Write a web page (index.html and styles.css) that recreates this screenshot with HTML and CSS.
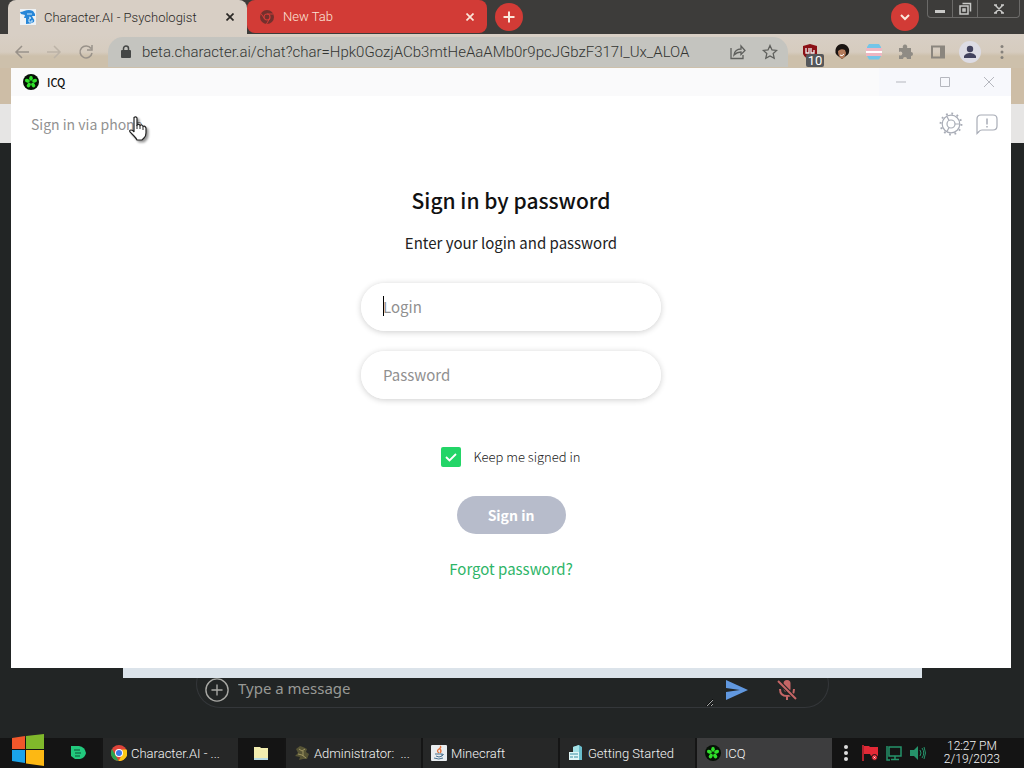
FILE: index.html
```html
<!DOCTYPE html>
<html lang="en">
<head>
<meta charset="utf-8">
<title>ICQ</title>
<link rel="stylesheet" href="styles.css">
</head>
<body>
<svg class="defs" aria-hidden="true">
  <symbol id="icq" viewBox="0 0 16 16">
    <circle cx="8" cy="8" r="8" fill="#061006"/>
    <g fill="#2fe02a"><ellipse cx="8" cy="4.2" rx="1.8" ry="2.5"/><ellipse cx="8" cy="4.2" rx="1.8" ry="2.5" transform="rotate(72 8 8)"/><ellipse cx="8" cy="4.2" rx="1.8" ry="2.5" transform="rotate(144 8 8)"/><ellipse cx="8" cy="4.2" rx="1.8" ry="2.5" transform="rotate(216 8 8)"/><ellipse cx="8" cy="4.2" rx="1.8" ry="2.5" transform="rotate(288 8 8)"/></g>
    <circle cx="8" cy="8" r="1" fill="#0c300c"/>
  </symbol>
</svg>
<div class="desktop">
  <div class="browser">
    <header class="tabstrip">
      <div class="tab tab-active">
        <svg class="icon16" viewBox="0 0 16 16"><rect width="16" height="16" fill="#eef2f5"/><path d="M0 3q2 0 4-1 5-2 9 0l2 3v2h-3l1 2q2 2 1 4-3 2-8 2V9H4L5 6 1 5z" fill="#2686d8"/><path d="M7 5h5M9 8l2 1-2 1v3h3v-2" stroke="#cfe9fb" fill="none"/></svg>
        <span class="tab-title">Character.AI - Psychologist</span>
        <button class="tab-close" aria-label="Close tab"><svg viewBox="0 0 8 8"><path d="M.5.5l7 7m0-7l-7 7"/></svg></button>
      </div>
      <div class="tab tab-red">
        <svg class="icon16" viewBox="0 0 16 16"><circle cx="8" cy="8" r="7" fill="#73302d"/><circle cx="8" cy="8" r="3" fill="none" stroke="#d23c38" stroke-width="1.2"/><path d="M8 5h6.500M5.400 9.500L2 4.500M10.600 9.500L7.500 15" stroke="#d23c38"/></svg>
        <span class="tab-title">New Tab</span>
        <button class="tab-close" aria-label="Close tab"><svg viewBox="0 0 8 8"><path d="M.5.5l7 7m0-7l-7 7"/></svg></button>
      </div>
      <button class="round-btn" aria-label="New tab"><svg viewBox="0 0 28 28"><path d="M14 8.500v11M8.500 14h11"/></svg></button>
      <span class="grow"></span>
      <button class="round-btn search-tabs" aria-label="Search tabs"><svg viewBox="0 0 28 28"><path d="M10 12l4 4 4-4"/></svg></button>
      <div class="caption">
        <button class="cap-small" aria-label="Minimize"><svg viewBox="0 0 14 14"><path d="M2 9.500h10" stroke-width="3"/></svg></button>
        <button class="cap-small" aria-label="Restore"><svg viewBox="0 0 14 14"><path d="M4.500 1.500h8v8M2 4h8v8H2zM5 7h2v2H5z" fill="none"/></svg></button>
        <button class="cap-close" aria-label="Close"><svg viewBox="0 0 14 14"><path d="M3 3l8 8m0-8l-8 8M2 3h3M9 3h3M2 11h3M9 11h3" fill="none"/></svg></button>
      </div>
    </header>
    <div class="toolbar">
      <button class="tool back" aria-label="Back"><svg viewBox="0 0 16 16"><path d="M15 8H2m6-6L2 8l6 6"/></svg></button>
      <button class="tool forward" aria-label="Forward"><svg viewBox="0 0 16 16"><path d="M1 8h13M8 2l6 6-6 6"/></svg></button>
      <button class="tool reload" aria-label="Reload"><svg viewBox="0 0 16 16"><path d="M13 4.500A6 6 0 1 0 14 9M14 1v5H9"/></svg></button>
      <div class="omnibox">
        <svg class="lock" viewBox="0 0 10 14"><rect y="5" width="10" height="8" rx="1" fill="#454746"/><path d="M2.500 6V3.500a2.500 2.500 0 0 1 5 0V6" fill="none" stroke="#454746" stroke-width="1.500"/></svg>
        <input class="url" type="text" aria-label="Address" value="beta.character.ai/chat?char=Hpk0GozjACb3mtHeAaAMb0r9pcJGbzF317I_Ux_ALOA">
        <button class="tool dark" aria-label="Share"><svg viewBox="0 0 16 16"><path d="M1 4v10.500h12V11M4 11q1-6 7-6V2l4 4.500-4 4V8Q7 8 4 11z"/></svg></button>
        <button class="tool dark star" aria-label="Bookmark"><svg viewBox="0 0 16 16"><path d="M8 1.500l2 4.400 4.700.5-3.500 3.200 1 4.700L8 11.900l-4.200 2.400 1-4.700L1.300 6.400 6 5.900z"/></svg></button>
      </div>
      <div class="extensions">
        <button class="tool ublock" aria-label="uBlock"><svg viewBox="0 0 16 16"><path d="M8 0l7 2v8q-2 4-7 6-5-2-7-6V2z" fill="#8b1015"/><path d="M4 4v5h3V4M9 4v5h3V6" fill="none" stroke="#eee" stroke-width="1.300"/></svg><span class="count">10</span></button>
        <button class="tool" aria-label="Profile extension"><svg viewBox="0 0 16 16"><path d="M2 4q2-4 6-4 5 0 7 5 1 5-3 7l-4 3-4-3Q0 9 2 4z" fill="#1a1411"/><path d="M4 7q3-3 7-1l1 3q-1 5-4 6-4-2-4-8z" fill="#b57c5b"/><path d="M6 11q2 2 4-1" fill="none" stroke="#fff"/></svg></button>
        <button class="tool" aria-label="Flag extension"><svg viewBox="0 0 16 16"><path d="M3 0h10l2 3v2H1V3z" fill="#73c5e8"/><path d="M0 4h16v3H0zM0 9h16v3H0z" fill="#eeb6c1"/><path d="M0 7h16v2H0z" fill="#fff"/><path d="M1 12h14l-2 3.500H3z" fill="#73c5e8"/></svg></button>
        <button class="tool" aria-label="Extensions"><svg viewBox="0 0 16 16"><path d="M1 4h4a2.300 2.300 0 1 1 4 0h4v4a2 2 0 1 1 0 4v3H9a2 2 0 1 0-4 0H1v-4a2 2 0 1 0 0-3z" fill="#8f8b84"/></svg></button>
        <button class="tool" aria-label="Side panel"><svg viewBox="0 0 16 16"><path d="M2 2.500h12v11H2z" fill="none" stroke="#8b867e" stroke-width="2"/><path d="M10 2h4v12h-4z" fill="#8b867e"/></svg></button>
        <button class="tool profile" aria-label="Profile"><svg viewBox="0 0 22 22"><circle cx="11" cy="11" r="11" fill="#dddce4"/><circle cx="11" cy="8" r="3.200" fill="#42425e"/><path d="M5 17v-2q2-3 6-3t6 3v2z" fill="#42425e"/></svg></button>
        <button class="tool" aria-label="Menu"><svg viewBox="0 0 16 16"><g fill="#85817b"><circle cx="8" cy="2.500" r="1.500"/><circle cx="8" cy="8" r="1.500"/><circle cx="8" cy="13.500" r="1.500"/></g></svg></button>
      </div>
    </div>
    <div class="theme-band"></div>
    <div class="bookmarks"></div>
    <main class="page">
      <div class="composer">
        <button class="add" aria-label="Add"><svg viewBox="0 0 26 26"><circle cx="13" cy="13" r="12"/><path d="M13 7v12M7 13h12"/></svg></button>
        <textarea class="message" rows="1" aria-label="Message" placeholder="Type a message"></textarea>
        <button class="add" aria-label="Send"><svg viewBox="0 0 24 24"><path d="M1 2l22 10L1 22v-8l14-2L1 10z" fill="#6198df" stroke="none"/></svg></button>
        <button class="add" aria-label="Microphone"><svg viewBox="0 0 24 24"><rect x="8.500" y="2" width="7" height="12" rx="3.500" fill="#c66666" stroke="none"/><path d="M5 11q0 7 7 7t7-7M12 18v4" stroke="#c66666" stroke-width="2"/><path d="M3 3l18 18" stroke="#222525" stroke-width="4"/><path d="M3 3l18 18" stroke="#c66666" stroke-width="2"/></svg></button>
      </div>
    </main>
  </div>

  <div class="back-window"></div>

  <section class="icq">
    <header class="icq-title">
      <svg class="icon16"><use href="#icq"/></svg><span>ICQ</span>
      <span class="grow"></span>
      <div class="icq-caption">
        <button aria-label="Minimize"><svg viewBox="0 0 12 12"><path d="M1 6h10"/></svg></button>
        <button aria-label="Maximize"><svg viewBox="0 0 12 12"><path d="M1.500 1.500h9v9h-9z"/></svg></button>
        <button aria-label="Close"><svg viewBox="0 0 12 12"><path d="M1 1l10 10m0-10L1 11"/></svg></button>
      </div>
    </header>
    <div class="icq-top">
      <a class="phone" href="#phone">Sign in via phone</a>
      <span class="grow"></span>
      <button aria-label="Settings"><svg viewBox="0 0 24 24"><circle cx="12" cy="12" r="8.800"/><circle cx="12" cy="12" r="10.400" stroke-width="2" stroke-dasharray="1.800 3.650"/><circle cx="12" cy="12" r="4"/><path d="M10 8.500L8 4.500M10 15.500l-2 4M16 12h4.500"/></svg></button>
      <button aria-label="Report a problem"><svg viewBox="0 0 24 24"><path d="M2 21.500V7q0-4 4-4h12q4 0 4 4v7q0 4-4 4H7q-2 0-3 1.500z"/><path d="M12 6.500v6M12 14v1.500" stroke-width="1.500"/></svg></button>
    </div>
    <form class="login">
      <h1>Sign in by password</h1>
      <p>Enter your login and password</p>
      <label class="field focused"><input type="text" placeholder="Login" aria-label="Login"></label>
      <label class="field"><input type="password" placeholder="Password" aria-label="Password"></label>
      <label class="keep"><input type="checkbox" checked>Keep me signed in</label>
      <button class="submit" type="button">Sign in</button>
      <a class="forgot" href="#forgot">Forgot password?</a>
    </form>
  </section>

  <svg class="pointer" viewBox="0 0 20 26"><path d="M6 1.500q2-1.500 3 .5v7q2-1.500 3 .5 2-1.500 3 1 2-1 3 1.500V17q0 3-2 5l-2 2H9q-1-2-3-4l-4-4q-1-2 1-2t3 2z" fill="#fff" stroke="#222" stroke-width="1.200"/><path d="M9 9v4M12 10v3M15 11v3" stroke="#222"/></svg>

  <footer class="taskbar">
    <button class="start" aria-label="Start"><svg viewBox="0 0 32 32"><path d="M0 4l13-2v13H0z" fill="#f1572b"/><path d="M14 2l18-2v15H14z" fill="#80b82b"/><path d="M0 16h13v13L0 27z" fill="#1aa3ea"/><path d="M14 16h18v16l-18-2.500z" fill="#fdb813"/></svg></button>
    <button class="quick" aria-label="Documents"><svg class="icon16" viewBox="0 0 16 16"><path d="M1 1h8q6 1 7 7-1 5-6 6H5l-4-3z" fill="#22c97d"/><path d="M4 5h6M5 8h6M5 11h5" stroke="#0b5237"/></svg></button>
    <button class="task"><svg class="icon16" viewBox="0 0 16 16"><circle cx="8" cy="8" r="8" fill="#e0443a"/><path d="M1 4l4 7 2.500 5A8 8 0 0 1 1 4z" fill="#2aa350"/><path d="M7.500 16L12 8l-1-3.500h4.500A8 8 0 0 1 7.500 16z" fill="#fbc816"/><circle cx="8" cy="8" r="4" fill="#fff"/><circle cx="8" cy="8" r="3" fill="#3a78e7"/></svg><span>Character.AI - ...</span></button>
    <button class="quick" aria-label="Files"><svg class="icon16" viewBox="0 0 16 16"><path d="M1 2h6l1 1h7v12H1z" fill="#f2edaf"/><path d="M1 13h14v2H1z" fill="#b9dce4"/></svg></button>
    <button class="task"><svg class="icon16" viewBox="0 0 16 16"><path d="M2 4l4-3 3 1 4 2-1 3 3 2-2 5H9l-4 1 1-3-5-1 3-3z" fill="#575435"/><path d="M5 4l3 2 3-2M4 9l4 1 4 3M9 6v5" stroke="#a09662" fill="none"/></svg><span>Administrator:&nbsp; ...</span></button>
    <button class="task"><svg class="icon16" viewBox="0 0 16 16"><rect width="16" height="16" rx="1" fill="#e9edf0"/><path d="M8 8q-3-2 0-4t1-3M9 8q2-2 0-4" fill="none" stroke="#e2733c" stroke-width="1.300"/><path d="M4 9h7v2q-3 2-6 0M11 9q3 0 0 2M3 13q5 2 9 0" fill="none" stroke="#4b7290"/></svg><span>Minecraft</span></button>
    <button class="task"><svg class="icon16" viewBox="0 0 16 16"><path d="M5 2l6-2 3 2v13H5z" fill="#69bdcc"/><path d="M5 2l6-2v14H5z" fill="#a5e1e6"/><path d="M1 7h10v8H1z" fill="#dff5f6"/><path d="M2 9h8M2 12h3m1 0h4" stroke="#3990a4"/></svg><span>Getting Started</span></button>
    <button class="task current"><svg class="icon16"><use href="#icq"/></svg><span>ICQ</span></button>
    <div class="tray">
      <svg class="icon16" viewBox="0 0 16 16" fill="#ddd"><circle cx="8" cy="2" r="2"/><circle cx="8" cy="8" r="2"/><circle cx="8" cy="14" r="2"/></svg>
      <svg class="icon16" viewBox="0 0 16 16"><path d="M1 0v16" stroke="#e32936" stroke-width="1.500"/><path d="M2 1h5l1 1h8v9H9L8 9H2z" fill="#e32936"/><circle cx="12.500" cy="12.500" r="3" fill="#e32936" stroke="#151515"/><path d="M11.500 11.500l2 2m0-2l-2 2" stroke="#fff" stroke-width=".7"/></svg>
      <svg class="icon16" viewBox="0 0 16 16" fill="none" stroke="#25936a" stroke-width="1.500"><path d="M3 2h12v9H3zM9 11v3M5 14.500h8M1 1v14h3"/></svg>
      <svg class="icon16" viewBox="0 0 16 16"><path d="M0 5h4l4-4v14l-4-4H0z" fill="#25936a"/><path d="M10 5q2 3 0 6M12 3q3.500 5 0 10M14 2q3 6 0 12" fill="none" stroke="#25936a"/></svg>
    </div>
    <div class="clock"><time>12:27 PM</time><time>2/19/2023</time></div>
  </footer>
</div>
</body>
</html>
```
FILE: styles.css
```css
* { box-sizing: border-box; }
body { margin: 0; font-family: Roboto, "Liberation Sans", sans-serif; }
button { border: 0; padding: 0; background: none; color: inherit; font: inherit; display: flex; align-items: center; justify-content: center; }
svg { display: block; flex: none; }
.defs { position: absolute; width: 0; height: 0; }
.icon16 { width: 16px; height: 16px; }
.grow { flex: 1; }
.desktop { position: relative; height: 100vh; min-height: 700px; display: flex; flex-direction: column; overflow: hidden; background: #222525; }

.browser { flex: 1; display: flex; flex-direction: column; }
.tabstrip { display: flex; height: 34px; background: #3d3c3a; padding-left: 8px; align-items: stretch; }
.tab { display: flex; align-items: center; gap: 8px; padding: 0 11px 0 12px; width: 239px; border-radius: 8px 8px 0 0; font-weight: 300; font-size: 13px; }
.tab-active { background: #d8cfc5; color: #2a2825; }
.tab-red { width: 240px; background: #d23b36; color: #fbe5d8; border-radius: 8px; height: 33px; }
.tab-title { flex: 1; white-space: nowrap; }
.tab-close { width: 12px; height: 16px; }
.tab-close svg { width: 8px; height: 8px; stroke: currentColor; stroke-width: 1.7; }
.round-btn { width: 28px; height: 28px; margin: 3px 0 0 8px; border-radius: 50%; background: #d23b36; }
.round-btn svg { width: 28px; height: 28px; fill: none; stroke: #fbe8dc; stroke-width: 2; }
.search-tabs { margin-right: 8px; }
.caption { display: flex; height: 18px; margin-right: 4px; border: 1px solid #6b6a68; border-top: 0; border-radius: 0 0 4px 4px; }
.caption svg { width: 14px; height: 14px; stroke: #c9c9c7; stroke-width: 1.5; }
.cap-small { width: 25px; border-right: 1px solid #6b6a68; }
.cap-close { width: 41px; }

.toolbar { display: flex; height: 34px; padding: 2px 14px 0; align-items: center; background: linear-gradient(#d8cfc5 0, #d6ccbf 18px, #cdc0ab 22px, #cdc0ab 100%); }
.tool { width: 16px; height: 24px; }
.tool svg { width: 16px; height: 16px; fill: none; }
.back, .forward, .reload { margin-right: 16px; }
.back svg, .reload svg { stroke: #99928a; stroke-width: 1.5; }
.forward svg { stroke: #bcb3a7; stroke-width: 1.5; }
.omnibox { flex: 1; display: flex; align-items: center; height: 30px; margin-left: -2px; padding: 0 10px 0 13px; border-radius: 15px 15px 0 0; background: #c4c4bf; }
.lock { width: 10px; height: 14px; }
.url { flex: 1; min-width: 0; border: 0; padding: 0; margin-left: 11px; background: none; font: 300 15px/20px Roboto, sans-serif; color: #333532; }
.dark svg { stroke: #5f605d; stroke-width: 1.3; }
.star { margin-left: 16px; }
.extensions { display: flex; align-items: center; gap: 16px; margin-left: 14px; }
.ublock { position: relative; }
.count { position: absolute; left: 4px; top: 14px; width: 18px; height: 13px; border-radius: 2px; background: #55575a; color: #fff; font: 13px/13px Roboto, sans-serif; }
.profile svg { width: 22px; height: 22px; }
.theme-band { height: 36px; background: #cdbda6; }
.bookmarks { height: 39px; background: #e6e5e4; }
.page { flex: 1; display: flex; flex-direction: column; justify-content: flex-end; padding: 0 195px 30px 196px; }
.composer { display: flex; align-items: center; height: 48px; padding: 12px 28px 0 7px; border: 1px solid #34373a; border-top: 0; border-radius: 24px; }
.add { width: 26px; height: 26px; margin-right: 24px; }
.add svg { width: 24px; height: 24px; fill: none; stroke: #a8a8a4; stroke-width: 1.5; }
.add:first-child { margin-right: 8px; }
.add:last-child { margin-right: 0; }
.message { flex: 1; height: 34px; margin-right: 10px; padding: 4px 0; border: 0; background: none; resize: both; font: 15px/22px "Noto Sans", sans-serif; color: #aaa; overflow: hidden; }
.message::placeholder { color: #989995; opacity: 1; }

.back-window { position: absolute; left: 12%; right: 10%; bottom: 90px; height: 40px; background: #dbe3ea; }

.icq { position: absolute; left: 11px; right: 13px; top: 68px; bottom: 100px; display: flex; flex-direction: column; background: #fff; font-family: "Noto Sans CJK KR", sans-serif; }
.icq-title { display: flex; align-items: center; gap: 8px; height: 28px; padding-left: 12px; background: #fafafb; font-size: 11px; line-height: 16px; font-weight: 500; color: #111; }
.icq-caption { display: flex; height: 28px; background: #f7f8fc; }
.icq-caption button { width: 44px; }
.icq-caption svg { width: 12px; height: 12px; fill: none; stroke: #b5b7be; }
.icq-top { display: flex; align-items: center; gap: 12px; height: 56px; padding: 0 12px 0 20px; }
.icq-top svg { width: 24px; height: 24px; fill: none; stroke: #a8acb6; stroke-width: 1.2; }
.phone { color: #929292; font-size: 14px; line-height: 20px; text-decoration: none; }
.login { display: flex; flex-direction: column; align-items: center; padding-top: 33px; }
.login h1 { margin: 0; font-size: 21px; line-height: 30px; font-weight: 500; color: #111; }
.login p { margin: 16px 0 28px; font-size: 15px; line-height: 24px; color: #222; }
.field { position: relative; width: 300px; height: 48px; margin-bottom: 20px; border-radius: 24px; box-shadow: 0 1px 6px rgba(0, 0, 0, .2); }
.field input { width: 100%; height: 48px; border: 0; border-radius: 24px; padding: 0 22px 2px; background: #fff; font: 15px/24px "Noto Sans CJK KR", sans-serif; }
.field input::placeholder { color: #909090; opacity: 1; }
.focused::after { content: ""; position: absolute; left: 22px; top: 13px; width: 1px; height: 20px; background: #000; }
.keep { display: flex; align-items: center; gap: 12px; margin-top: 28px; font-size: 13px; line-height: 20px; font-weight: 300; color: #222; }
.keep input { appearance: none; width: 20px; height: 20px; margin: 0; border-radius: 2px; background: #23d567 url("data:image/svg+xml,%3Csvg xmlns='http://www.w3.org/2000/svg' viewBox='0 0 20 20'%3E%3Cpath d='M5 10l3.500 3.500L15 7' fill='none' stroke='white' stroke-width='1.8'/%3E%3C/svg%3E"); }
.submit { width: 109px; height: 38px; margin-top: 29px; border-radius: 19px; background: #b7bccb; color: #fff; font-size: 14px; font-weight: 700; }
.forgot { margin-top: 23px; font-size: 15px; line-height: 24px; color: #2eb568; text-decoration: none; }
.pointer { position: absolute; left: 128px; top: 116px; width: 20px; height: 26px; fill: none; filter: drop-shadow(2px 2px 1px rgba(0, 0, 0, .4)); }

.taskbar { display: flex; height: 30px; background: #141414; color: #f4f4f4; font-size: 13px; font-weight: 300; }
.start { width: 55px; }
.start svg { width: 32px; height: 32px; margin-top: -6px; }
.quick { width: 46px; }
.task { flex: 1; gap: 4px; justify-content: flex-start; padding-left: 8px; border-left: 2px solid #151515; background: #262727; white-space: nowrap; }
.current { background: #3d3d3e; }
.tray { display: flex; align-items: center; gap: 8px; padding: 0 18px 0 6px; }
.clock { display: flex; flex-direction: column; align-items: center; justify-content: center; padding-right: 24px; line-height: 13px; font-size: 12px; }
```
